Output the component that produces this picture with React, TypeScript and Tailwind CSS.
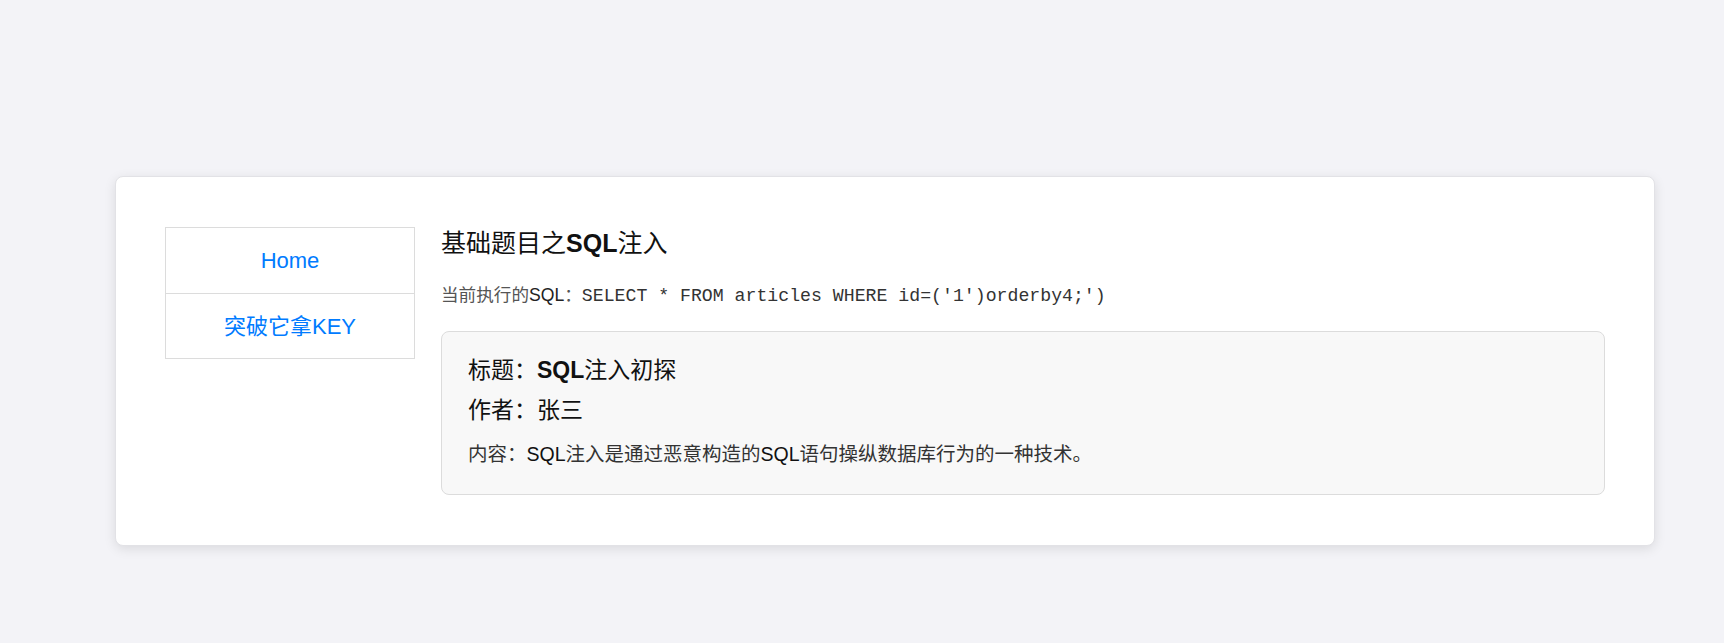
import React from "react"

const sans = "font-['Liberation_Sans','Noto_Sans_CJK_SC',sans-serif]"

const navItems = ["Home", "突破它拿KEY"]

const App = () => (
  <div className={`min-h-screen bg-[#f3f3f7] pt-[176px] ${sans}`}>
    <div className="ml-[115px] w-[1540px] rounded-lg border border-[#e2e2e6] bg-white px-[49px] py-[50px] shadow-[0_3px_12px_rgba(0,0,0,0.1)]">
      <div className="flex gap-[26px]">
        <nav className="w-[250px] shrink-0 self-start border border-[#dcdcdc]">
          {navItems.map((item, i) => (
            <a
              key={item}
              href="#"
              className={`flex h-[65px] items-center justify-center text-[22px] text-[#007bff] ${
                i > 0 ? "border-t border-[#dcdcdc]" : ""
              }`}
            >
              {item}
            </a>
          ))}
        </nav>

        <div className="flex-1">
          <h3 className="text-[25px] font-normal leading-[32px] text-[#111]">
            基础题目之<b className="font-bold">SQL</b>注入
          </h3>
          <p className="mt-[23px] text-[17.6px] leading-[26px] text-[#555]">
            当前执行的<span className="text-[#222]">SQL</span>：
            <code className="font-['Liberation_Mono',monospace] text-[18.2px] text-[#333]">
              SELECT * FROM articles WHERE id=('1')orderby4;')
            </code>
          </p>

          <div className="mt-[22px] rounded-lg border border-[#dcdcdc] bg-[#f8f8f8] px-[26px] pb-[26px] pt-[23px]">
            <p className="text-[23px] leading-[30px] text-[#111]">
              标题：<b className="font-bold">SQL</b>注入初探
            </p>
            <p className="mt-[10px] text-[23px] leading-[30px] text-[#111]">作者：张三</p>
            <p className="mt-[15px] text-[19.5px] leading-[28px] text-[#333]">
              内容：<span className="text-[#111]">SQL</span>注入是通过恶意构造的
              <span className="text-[#111]">SQL</span>语句操纵数据库行为的一种技术。
            </p>
          </div>
        </div>
      </div>
    </div>
  </div>
)

export default App
